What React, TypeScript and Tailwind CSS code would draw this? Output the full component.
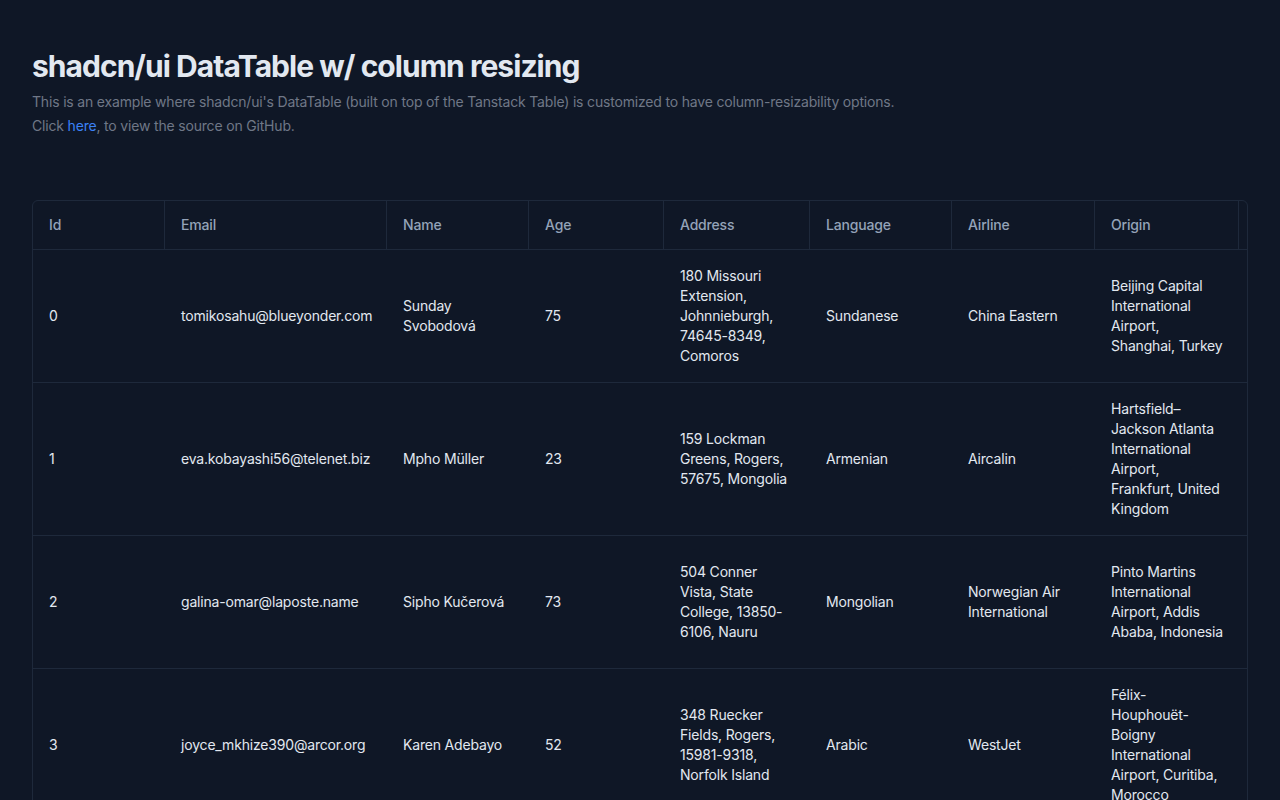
const columns = [
  { label: "Id", width: "w-[132px]" },
  { label: "Email", width: "w-[222px]" },
  { label: "Name", width: "w-[142px]" },
  { label: "Age", width: "w-[135px]" },
  { label: "Address", width: "w-[146px]" },
  { label: "Language", width: "w-[142px]" },
  { label: "Airline", width: "w-[143px]" },
  { label: "Origin", width: "w-[144px]" },
];

const rows = [
  {
    id: 0,
    email: "tomikosahu@blueyonder.com",
    name: "Sunday Svobodová",
    age: 75,
    address: "180 Missouri Extension, Johnnieburgh, 74645-8349, Comoros",
    language: "Sundanese",
    airline: "China Eastern",
    origin: "Beijing Capital International Airport, Shanghai, Turkey",
    height: "h-[133px]",
  },
  {
    id: 1,
    email: "eva.kobayashi56@telenet.biz",
    name: "Mpho Müller",
    age: 23,
    address: "159 Lockman Greens, Rogers, 57675, Mongolia",
    language: "Armenian",
    airline: "Aircalin",
    origin: "Hartsfield–Jackson Atlanta International Airport, Frankfurt, United Kingdom",
    height: "h-[153px]",
  },
  {
    id: 2,
    email: "galina-omar@laposte.name",
    name: "Sipho Kučerová",
    age: 73,
    address: "504 Conner Vista, State College, 13850-6106, Nauru",
    language: "Mongolian",
    airline: "Norwegian Air International",
    origin: "Pinto Martins International Airport, Addis Ababa, Indonesia",
    height: "h-[133px]",
  },
  {
    id: 3,
    email: "joyce_mkhize390@arcor.org",
    name: "Karen Adebayo",
    age: 52,
    address: "348 Ruecker Fields, Rogers, 15981-9318, Norfolk Island",
    language: "Arabic",
    airline: "WestJet",
    origin: "Félix-Houphouët-Boigny International Airport, Curitiba, Morocco",
    height: "h-[153px]",
  },
];

const cellClass = "border-b border-[#1e293b] px-4 py-4 align-middle";

export default function App() {
  return (
    <div className="h-screen overflow-hidden bg-[#0f1726] px-8 pt-12 font-['Inter',sans-serif] text-sm tracking-[-0.18px]">
      <h1 className="text-3xl leading-9 font-bold tracking-[-0.96px] text-[#e2e8f0]">
        shadcn/ui DataTable w/ column resizing
      </h1>
      <p className="mt-1.5 leading-6 text-[#6f7787]">
        This is an example where shadcn/ui's DataTable (built on top of the Tanstack Table) is
        customized to have column-resizability options.
        <br />
        Click{" "}
        <a href="#" className="text-[#3b82f6]">
          here
        </a>
        , to view the source on GitHub.
      </p>

      <div className="mt-[62px] overflow-hidden rounded-md border border-[#1e293b]">
        <table className="w-[1300px] table-fixed border-separate border-spacing-0 text-left">
          <thead>
            <tr className="h-[49px]">
              {columns.map((col) => (
                <th
                  key={col.label}
                  className={`${col.width} border-r border-b border-[#1e293b] px-4 font-medium text-[#94a3b8]`}
                >
                  {col.label}
                </th>
              ))}
              <th className="border-b border-[#1e293b]" />
            </tr>
          </thead>
          <tbody className="leading-5 text-[#e2e8f0]">
            {rows.map((row) => (
              <tr key={row.id} className={row.height}>
                <td className={cellClass}>{row.id}</td>
                <td className={cellClass}>{row.email}</td>
                <td className={cellClass}>{row.name}</td>
                <td className={cellClass}>{row.age}</td>
                <td className={cellClass}>{row.address}</td>
                <td className={cellClass}>{row.language}</td>
                <td className={cellClass}>{row.airline}</td>
                <td className={cellClass}>{row.origin}</td>
                <td className={cellClass} />
              </tr>
            ))}
          </tbody>
        </table>
      </div>
    </div>
  );
}
